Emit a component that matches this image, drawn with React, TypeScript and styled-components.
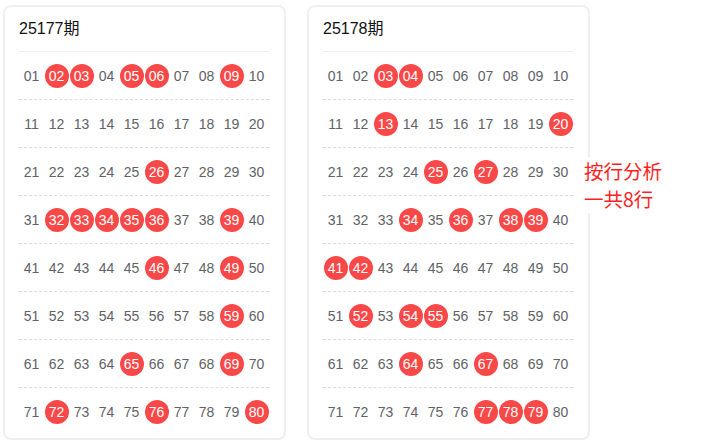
import { FC } from "react";
import styled, { createGlobalStyle } from "styled-components";

const GlobalStyle = createGlobalStyle`
  html, body {
    margin: 0;
    padding: 0;
    background: #ffffff;
  }
  body {
    font-family: "Liberation Sans", Arial, "Noto Sans CJK SC", sans-serif;
  }
`;

const Page = styled.div`
  position: relative;
  width: 707px;
  height: 445px;
  display: flex;
  align-items: flex-start;
  gap: 21px;
  padding: 5px 0 0 3px;
  box-sizing: border-box;
`;

const Card = styled.div`
  width: 283px;
  height: 435px;
  box-sizing: border-box;
  border: 2px solid #efefef;
  border-radius: 8px;
  background: #fff;
  padding: 0 15px 0 14px;
`;

const Title = styled.div`
  height: 44px;
  line-height: 44px;
  font-size: 16px;
  color: #111;
  border-bottom: 1px solid #eeeeee;
  font-family: "Liberation Sans", Arial, "Noto Sans CJK SC", sans-serif;
`;

const Row = styled.div<{ $last?: boolean }>`
  height: 48px;
  box-sizing: border-box;
  display: grid;
  grid-template-columns: repeat(10, 25px);
  align-items: center;
  border-bottom: ${(p) => (p.$last ? "none" : "1px dashed #dcdcdc")};
`;

const Ball = styled.span<{ $hit?: boolean }>`
  justify-self: center;
  width: 24px;
  height: 24px;
  border-radius: 50%;
  display: flex;
  align-items: center;
  justify-content: center;
  font-size: 14px;
  color: ${(p) => (p.$hit ? "#ffffff" : "#606266")};
  background: ${(p) => (p.$hit ? "#f94848" : "transparent")};
`;

const Note = styled.div`
  position: absolute;
  left: 584px;
  top: 157px;
  background: #fff;
  color: #ff1f1f;
  padding-right: 4px;
  font-family: "Noto Sans CJK SC", "Liberation Sans", sans-serif;
`;

const NoteLine = styled.div`
  font-size: 19.5px;
  line-height: 28px;
  height: 28px;
  white-space: nowrap;
`;

interface Draw {
  issue: string;
  hits: number[];
}

const draws: Draw[] = [
  {
    issue: "25177",
    hits: [2, 3, 5, 6, 9, 26, 32, 33, 34, 35, 36, 39, 46, 49, 59, 65, 69, 72, 76, 80],
  },
  {
    issue: "25178",
    hits: [3, 4, 13, 20, 25, 27, 34, 36, 38, 39, 41, 42, 52, 54, 55, 64, 67, 77, 78, 79],
  },
];

const pad = (n: number) => (n < 10 ? "0" + n : String(n));

const DrawCard: FC<{ draw: Draw }> = ({ draw }) => {
  const rows = Array.from({ length: 8 }, (_, r) =>
    Array.from({ length: 10 }, (_, c) => r * 10 + c + 1)
  );
  return (
    <Card>
      <Title>{draw.issue}期</Title>
      {rows.map((nums, i) => (
        <Row key={i} $last={i === rows.length - 1}>
          {nums.map((n) => (
            <Ball key={n} $hit={draw.hits.includes(n)}>
              {pad(n)}
            </Ball>
          ))}
        </Row>
      ))}
    </Card>
  );
};

export default function App() {
  return (
    <>
      <GlobalStyle />
      <Page>
        {draws.map((d) => (
          <DrawCard key={d.issue} draw={d} />
        ))}
        <Note>
          <NoteLine>按行分析</NoteLine>
          <NoteLine>一共8行</NoteLine>
        </Note>
      </Page>
    </>
  );
}
